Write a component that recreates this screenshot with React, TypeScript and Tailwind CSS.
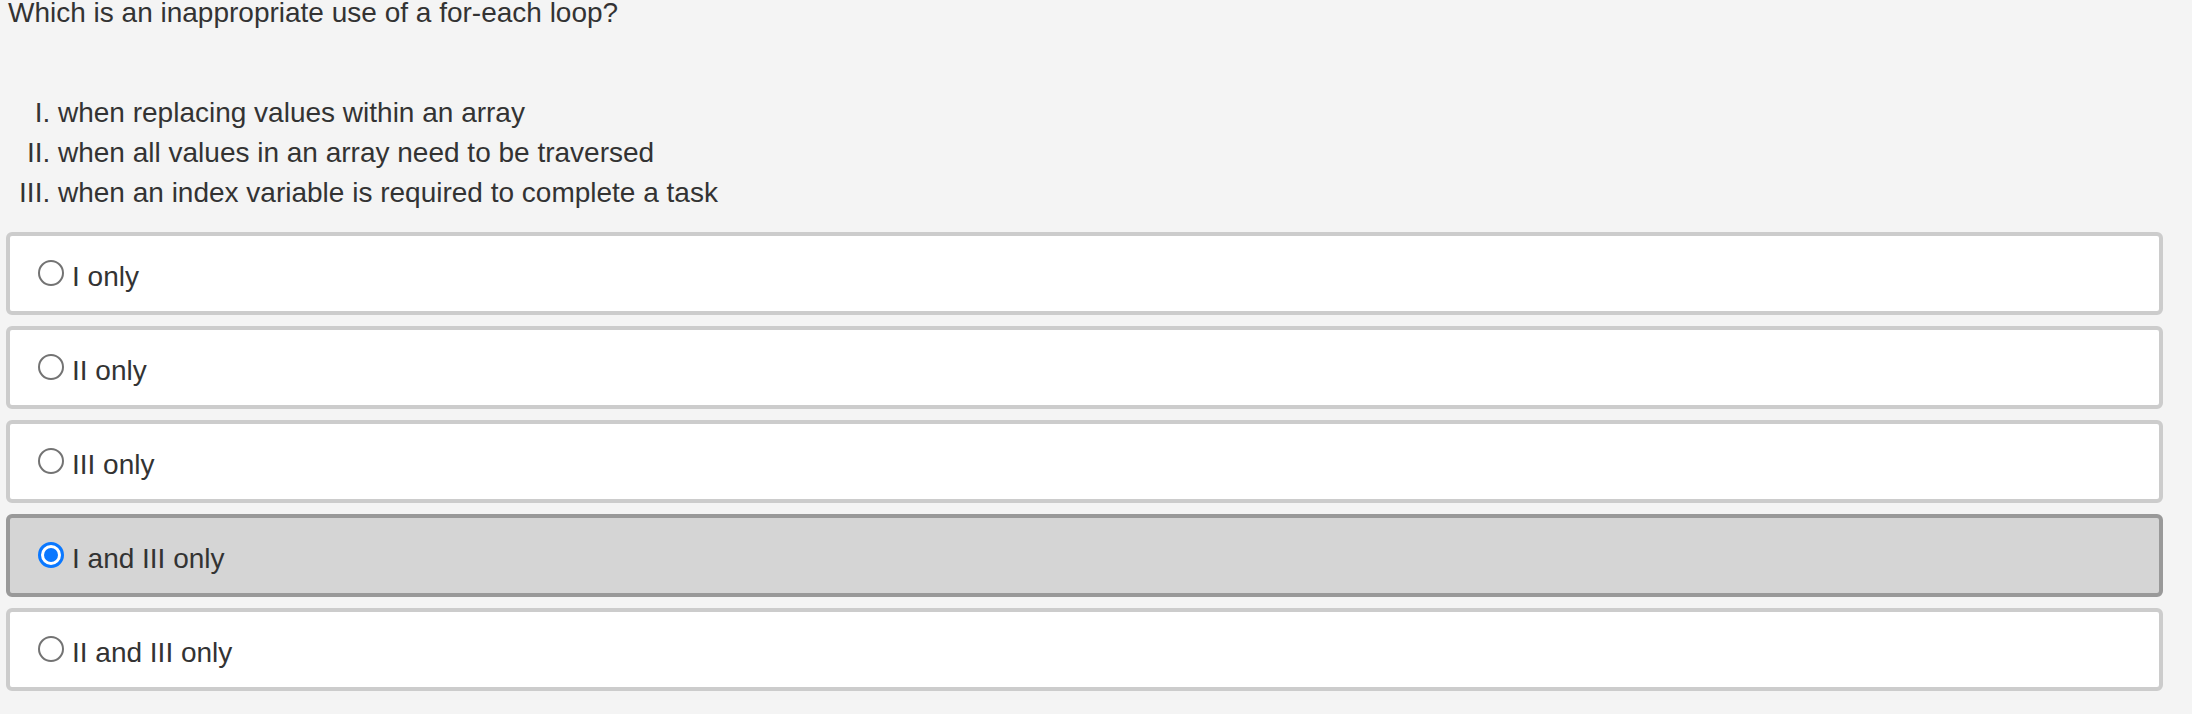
import { useState, type JSX } from 'react';

type Choice = {
  id: string;
  label: string;
};

const statements: string[] = [
  'when replacing values within an array',
  'when all values in an array need to be traversed',
  'when an index variable is required to complete a task',
];

const choices: Choice[] = [
  { id: 'a', label: 'I only' },
  { id: 'b', label: 'II only' },
  { id: 'c', label: 'III only' },
  { id: 'd', label: 'I and III only' },
  { id: 'e', label: 'II and III only' },
];

function RadioDot({ checked }: { checked: boolean }): JSX.Element {
  if (checked) {
    return (
      <span className="flex-none w-[26px] h-[26px] rounded-full border-[3px] border-[#0a78ff] bg-white flex items-center justify-center">
        <span className="w-[14px] h-[14px] rounded-full bg-[#0a78ff]" />
      </span>
    );
  }
  return <span className="flex-none w-[26px] h-[26px] rounded-full border-[2.5px] border-[#737373] bg-white" />;
}

export default function App(): JSX.Element {
  const [selected, setSelected] = useState<string>('d');

  return (
    <div
      className="min-h-[714px] bg-[#f4f4f4] text-[#333333] text-[28px] pb-[23px]"
      style={{ fontFamily: '"Liberation Sans", Arial, Helvetica, sans-serif' }}
    >
      <p className="pl-[8px] leading-[26px]">Which is an inappropriate use of a for-each loop?</p>

      <ol className="list-[upper-roman] mt-[67px] pl-[58px] leading-[40px]">
        {statements.map((s) => (
          <li key={s}>{s}</li>
        ))}
      </ol>

      <div className="mt-[19px] pl-[6px] pr-[29px] flex flex-col gap-[11px]">
        {choices.map((c) => {
          const active = c.id === selected;
          return (
            <label
              key={c.id}
              onClick={() => setSelected(c.id)}
              className={
                active
                  ? 'h-[83px] flex items-start pt-[24px] pl-[28px] rounded-[6px] border-[4px] border-[#999999] bg-[#d5d5d5] cursor-pointer'
                  : 'h-[83px] flex items-start pt-[24px] pl-[28px] rounded-[6px] border-[4px] border-[#cccccc] bg-white cursor-pointer'
              }
            >
              <RadioDot checked={active} />
              <span className="ml-[8px] mt-[1px] leading-[32px]">{c.label}</span>
            </label>
          );
        })}
      </div>
    </div>
  );
}
